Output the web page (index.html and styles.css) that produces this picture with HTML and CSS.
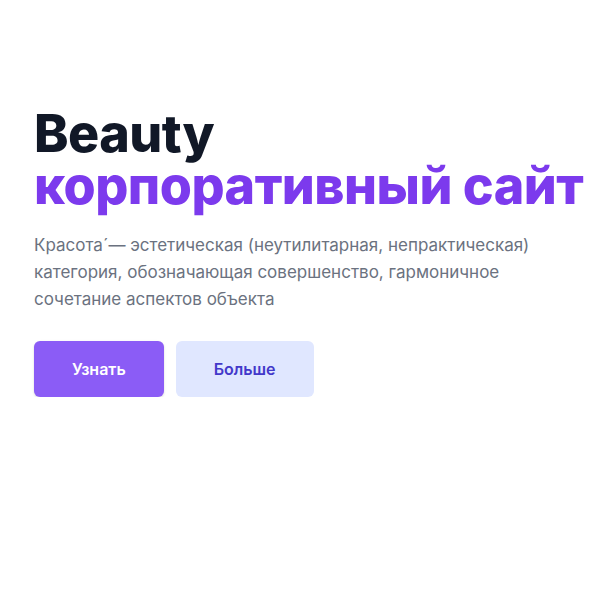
FILE: index.html
```html
<!DOCTYPE html>
<html lang="ru">
<head>
<meta charset="utf-8">
<title>Beauty</title>
<link rel="stylesheet" href="styles.css">
</head>
<body>
<main class="hero">
  <h1 class="title">
    <span class="title-main">Beauty</span>
    <span class="title-accent">корпоративный сайт</span>
  </h1>
  <p class="lead">Красота´— эстетическая (неутилитарная, непрактическая) категория, обозначающая совершенство, гармоничное сочетание аспектов объекта</p>
  <div class="actions">
    <a class="btn btn-primary" href="#">Узнать</a>
    <a class="btn btn-secondary" href="#">Больше</a>
  </div>
</main>
</body>
</html>
```
FILE: styles.css
```css
html, body {
  margin: 0;
  padding: 0;
  background: #ffffff;
}
body {
  font-family: Inter, "Noto Sans", sans-serif;
}
.hero {
  padding: 108px 10px 0 34px;
}
.title {
  margin: 0;
  font-size: 52px;
  line-height: 52px;
  font-weight: 800;
  letter-spacing: -0.01em;
}
.title-main {
  display: block;
  color: #111827;
}
.title-accent {
  display: block;
  color: #7c3aed;
}
.lead {
  margin: 20px 0 0;
  max-width: 540px;
  font-size: 17px;
  line-height: 27px;
  color: #6b7280;
}
.actions {
  margin-top: 28px;
  display: flex;
  gap: 12px;
}
.btn {
  display: flex;
  align-items: center;
  justify-content: center;
  padding: 16px 38px;
  font-size: 16px;
  line-height: 24px;
  font-weight: 600;
  border-radius: 6px;
  text-decoration: none;
}
.btn-primary {
  background: #8b5cf6;
  color: #ffffff;
  box-shadow: 0 1px 3px rgba(0,0,0,0.1), 0 1px 2px rgba(0,0,0,0.06);
}
.btn-secondary {
  background: #e0e7ff;
  color: #4338ca;
}
```
